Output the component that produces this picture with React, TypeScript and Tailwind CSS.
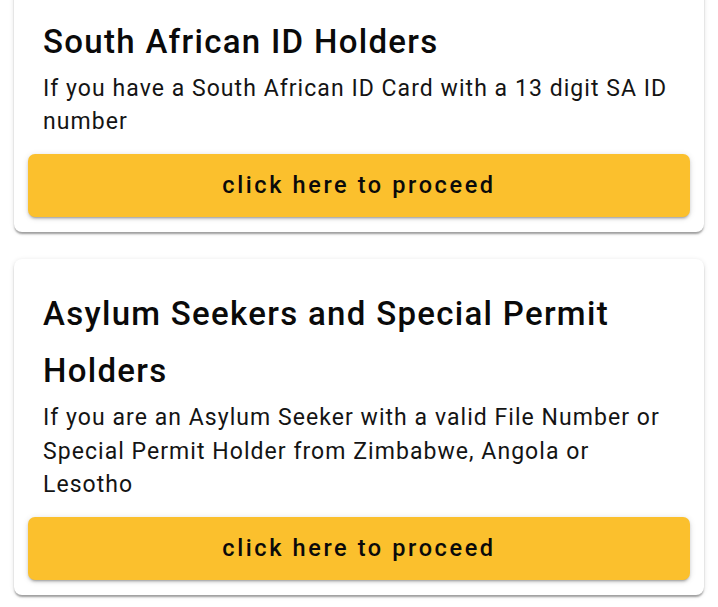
import React from "react";

const cards = [
  {
    title: "South African ID Holders",
    body: "If you have a South African ID Card with a 13 digit SA ID number",
  },
  {
    title: "Asylum Seekers and Special Permit Holders",
    body: "If you are an Asylum Seeker with a valid File Number or Special Permit Holder from Zimbabwe, Angola or Lesotho",
  },
];

export default function App() {
  return (
    <div
      className="min-h-[607px] w-full overflow-hidden bg-white"
      style={{ fontFamily: "Roboto, 'Noto Sans', sans-serif" }}
    >
      <div className="-mt-[13.5px] flex flex-col gap-[27px] px-[14px]">
        {cards.map((c) => (
          <div
            key={c.title}
            className="rounded-[8px] bg-white px-[14px] pb-[14.5px] pt-[14px] shadow-[0_3px_2px_-1px_rgba(0,0,0,0.22),0_2px_2px_0_rgba(0,0,0,0.14),0_1px_5px_0_rgba(0,0,0,0.12)]"
          >
            <div className="px-[15px] pt-[12px]">
              <h2 className="text-[33px] font-medium leading-[57px] tracking-[1.3px] text-[#0a0a0a]">
                {c.title}
              </h2>
              <p className="mt-[2.5px] text-[23px] leading-[33.2px] tracking-[1.05px] text-[#141414]">
                {c.body}
              </p>
            </div>
            <button className="mt-[16px] flex h-[63px] w-full items-center justify-center rounded-[7px] bg-[#fbc02d] text-[23.5px] font-medium tracking-[2.6px] text-[#0a0a0a] shadow-[0_3px_2px_-2px_rgba(0,0,0,0.2),0_2px_3px_0_rgba(0,0,0,0.14),0_1px_6px_0_rgba(0,0,0,0.12)]">
              click here to proceed
            </button>
          </div>
        ))}
      </div>
    </div>
  );
}
